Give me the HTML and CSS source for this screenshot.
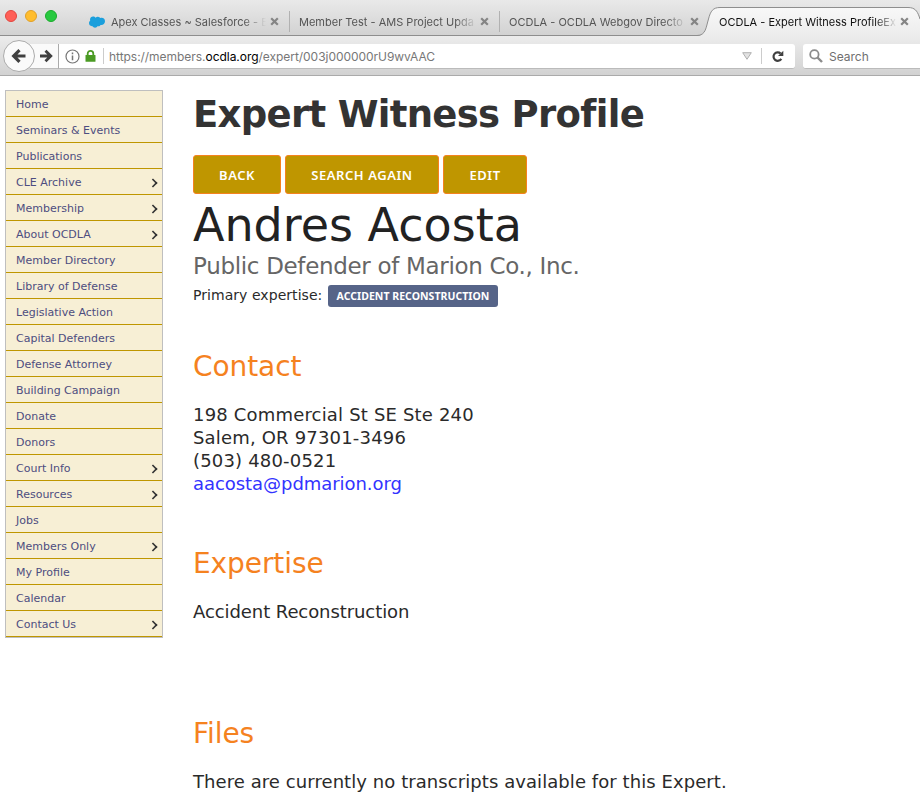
FILE: index.html
```html
<!DOCTYPE html>
<html lang="en">
<head>
<meta charset="utf-8">
<title>OCDLA - Expert Witness Profile</title>
<link rel="stylesheet" href="styles.css">
</head>
<body>
<svg class="defs" width="0" height="0">
  <symbol id="close" viewBox="0 0 9 9"><path d="M1.200 1.200l6.600 6.600M7.800 1.200L1.200 7.800" stroke="#858585" stroke-width="2.200" fill="none"/></symbol>
</svg>
<header class="tabs">
  <div class="lights"><i class="red"></i><i class="amber"></i><i class="green"></i></div>
  <div class="tab tab-first">
    <svg class="cloud" width="16" height="12" viewBox="0 0 16 12"><path d="M3 10.200C1 10.200 0 8.700 0 7.100 0 5.700.8 4.900 1.200 4.500.500 2 2.200.5 4 .5c1.200 0 2 .5 2.600 1.200C7.300.9 8.200.6 9 .7c1 .1 1.800.6 2.200 1.300C13.800 1 16 2.700 16 5.200c0 2.700-2.200 4.200-4.400 3.800-.7 1.300-2 1.500-2.900 1.100C7.600 12.300 4.200 12 3.600 10.200z" fill="#1b9fdc"/></svg>
    <span class="label t1">Apex Classes ~ Salesforce - E</span>
    <svg class="x" width="9" height="9"><use href="#close"/></svg>
  </div>
  <div class="tab tab-second">
    <span class="label t2">Member Test - AMS Project Upda</span>
    <svg class="x" width="9" height="9"><use href="#close"/></svg>
  </div>
  <div class="tab tab-third">
    <span class="label t3">OCDLA - OCDLA Webgov Directo</span>
    <svg class="x" width="9" height="9"><use href="#close"/></svg>
  </div>
  <div class="tab tab-active">
    <svg class="shape" width="223" height="36" viewBox="0 0 223 36"><defs><linearGradient id="g" x1="0" y1="0" x2="0" y2="1"><stop offset="0" stop-color="#f8f8f8"/><stop offset="1" stop-color="#ececec"/></linearGradient></defs><path d="M0 36C9 35.500 9 27 11.500 19 13.500 11 16 7.500 23 7.500H211C218 7.500 220 11 222 16L223 20V36z" fill="url(#g)"/><path d="M0 35.500C9 35.500 9 27 11.500 19 13.500 11 16 7.500 23 7.500H211C218 7.500 220 11 222 16L223 19" fill="none" stroke="#8e8e8e"/></svg>
    <span class="label t4">OCDLA - Expert Witness ProfileEx</span>
    <svg class="x" width="9" height="9"><use href="#close"/></svg>
  </div>
</header>
<div class="toolbar">
  <div class="back"><svg width="16" height="16" viewBox="0 0 16 16"><path d="M14.500 8H3M8.500 2.200L2.700 8l5.800 5.800" fill="none" stroke="#404040" stroke-width="3.200"/></svg></div>
  <div class="forward"><svg width="13" height="14" viewBox="0 0 13 14"><path d="M0 7h10M5.500 1.700L10.800 7l-5.300 5.300" fill="none" stroke="#404040" stroke-width="2.800"/></svg></div>
  <div class="url">
    <svg class="info" width="15" height="15" viewBox="0 0 15 15"><circle cx="7.500" cy="7.500" r="6.500" fill="none" stroke="#757575" stroke-width="1.200"/><path d="M7.500 6.400v4.800M7.500 3.500v1.700" stroke="#757575" stroke-width="1.500"/></svg>
    <svg class="lock" width="11" height="12" viewBox="0 0 11 12"><path d="M2.700 6V3.700a2.800 2.800 0 015.600 0V6" fill="none" stroke="#4b9b24" stroke-width="1.800"/><rect x=".5" y="5" width="10" height="6.800" rx=".6" fill="#4b9b24"/></svg>
    <i class="bar"></i>
    <span class="address">https://members.<b>ocdla.org</b>/expert/003j000000rU9wvAAC</span>
    <svg class="drop" width="10" height="8" viewBox="0 0 10 8"><path d="M.7.700h8.600L5 7.300z" fill="#e2e2e2" stroke="#b0b0b0"/></svg>
    <i class="bar"></i>
    <svg class="reload" width="12" height="13" viewBox="0 0 12 13"><path d="M8.600 3.500A4.200 4.200 0 109.300 8.800" fill="none" stroke="#404040" stroke-width="2.200"/><path d="M11.300.700V6H6z" fill="#404040"/></svg>
  </div>
  <div class="search">
    <svg width="14" height="14" viewBox="0 0 14 14"><circle cx="5.400" cy="5.400" r="4.200" fill="none" stroke="#8b8b8b" stroke-width="1.800"/><path d="M8.500 8.500l4.500 4.500" stroke="#8b8b8b" stroke-width="2.400"/></svg>
    <span>Search</span>
  </div>
</div>
<div class="page">
  <nav class="menu">
    <a>Home</a><a>Seminars &amp; Events</a><a>Publications</a><a class="sub">CLE Archive</a><a class="sub">Membership</a><a class="sub">About OCDLA</a><a>Member Directory</a><a>Library of Defense</a><a>Legislative Action</a><a>Capital Defenders</a><a>Defense Attorney</a><a>Building Campaign</a><a>Donate</a><a>Donors</a><a class="sub">Court Info</a><a class="sub">Resources</a><a>Jobs</a><a class="sub">Members Only</a><a>My Profile</a><a>Calendar</a><a class="sub">Contact Us</a>
  </nav>
  <main>
    <h1>Expert Witness Profile</h1>
    <div class="buttons"><a class="b1">BACK</a><a class="b2">SEARCH AGAIN</a><a class="b3">EDIT</a></div>
    <div class="name">Andres Acosta</div>
    <div class="company">Public Defender of Marion Co., Inc.</div>
    <div class="primary"><span>Primary expertise:</span><span class="badge">ACCIDENT RECONSTRUCTION</span></div>
    <h2>Contact</h2>
    <p class="contact">198 Commercial St SE Ste 240<br>Salem, OR 97301-3496<br>(503) 480-0521<br><a class="mail">aacosta@pdmarion.org</a></p>
    <h2>Expertise</h2>
    <p class="expertise">Accident Reconstruction</p>
    <h2>Files</h2>
    <p class="files">There are currently no transcripts available for this Expert.</p>
  </main>
</div>
</body>
</html>
```
FILE: styles.css
```css
* { box-sizing: border-box; }
body { margin: 0; height: 792px; overflow: hidden; background: #fff; font-family: "DejaVu Sans", Verdana, sans-serif; color: #2a2a2a; }
svg { display: block; flex: none; }
.defs { position: absolute; }

.tabs { display: flex; height: 36px; background: linear-gradient(#e9e9e9, #d2d2d2); border-bottom: 1px solid #8e8e8e; font: 11px/14px Inter, sans-serif; color: #555; }
.lights { display: flex; gap: 8px; padding: 10px 0 0 5px; width: 79px; flex: none; }
.lights i { width: 12px; height: 12px; border-radius: 50%; border: 1px solid; }
.red { background: #ff5f57; border-color: #e2463f !important; }
.amber { background: #ffbd2e; border-color: #e0a028 !important; }
.green { background: #28c940; border-color: #1aab2c !important; }
.tab { display: flex; height: 36px; position: relative; flex: none; padding-top: 15px; }
.tab .x { margin-top: 2px; }
.tab-first { width: 210px; padding-left: 10px; }
.tab-second, .tab-third { width: 210px; padding-left: 10px; }
.tab-third { width: 198px; }
.tab-second::before, .tab-third::before { content: ""; position: absolute; left: 0; top: 11px; width: 1px; height: 21px; background: #b1b1b1; }
.cloud { margin: 1px 6px 0 0; }
.label { white-space: nowrap; flex: none; -webkit-mask-image: linear-gradient(90deg, #000 calc(100% - 22px), transparent); mask-image: linear-gradient(90deg, #000 calc(100% - 22px), transparent); }
.t1 { width: 155px; margin-right: 4px; }
.t2 { width: 178px; margin-right: 3px; }
.t3 { width: 178px; margin-right: 3px; }
.tab-active { width: 223px; padding-left: 22px; color: #111; }
.shape { position: absolute; left: 0; top: 0; }
.t4, .tab-active .x { position: relative; }
.t4 { width: 178px; margin-right: 3px; }

.toolbar { display: flex; height: 40px; padding: 8px 0 0 3px; background: linear-gradient(#ececec, #d2d2d2); border-bottom: 1px solid #aaa; }
.back { width: 32px; height: 32px; margin-top: -4px; border: 1px solid #ababab; border-radius: 50%; background: #fafafa; display: flex; align-items: center; justify-content: center; position: relative; z-index: 1; flex: none; }
.forward { width: 29px; height: 25px; margin-left: -5px; padding: 5px 0 0 10px; background: #fafafa; border-right: 1px solid #aaa; border-bottom: 1px solid #bbb; flex: none; }
.url { width: 736px; height: 25px; display: flex; align-items: center; background: #fff; border-bottom: 1px solid #bbb; border-radius: 0 3px 3px 0; padding-left: 6px; flex: none; }
.lock { margin-left: 5px; }
.bar { width: 1px; height: 16px; background: #ccc; margin-left: 7px; }
.address { font: 12px/16px Inter, sans-serif; letter-spacing: -.04px; color: #777; margin-left: 5px; width: 633px; padding-top: 1px; }
.address b { font-weight: 400; color: #000; }
.url .drop { margin-right: 2px; }
.reload { margin-left: 10px; }
.search { display: flex; align-items: center; width: 130px; flex: none; height: 25px; margin-left: 8px; padding-left: 6px; gap: 6px; background: #fff; border-bottom: 1px solid #bbb; border-radius: 3px 0 0 3px; font: 12px/16px Inter, sans-serif; color: #6f6f6f; }
.search span { padding-top: 2px; }

.page { display: flex; align-items: flex-start; padding: 14px 0 0 5px; }
.menu { width: 158px; border: 1px solid #bfbfbf; flex: none; }
.menu a { display: flex; align-items: center; justify-content: space-between; height: 26px; padding: 2px 5px 0 10px; background: #f7efd5; border-bottom: 1px solid #bf9600; font-size: 11px; line-height: 15px; color: #4d4d80; }
.menu .sub::after { content: ""; width: 6px; height: 6px; border: solid #333; border-width: 2px 2px 0 0; transform: scale(.8) rotate(45deg); }
main { margin-left: 30px; padding-top: 3px; width: 700px; white-space: nowrap; }
h1, h2, p { margin: 0; }
h1 { font-size: 37px; line-height: 44px; color: #333; letter-spacing: -.7px; }
.buttons { display: flex; gap: 4px; margin-top: 18px; }
.buttons a { height: 39px; border: 1px solid #f5821f; border-radius: 3px; background: #bf9600; color: #fff; font: 600 13px/39px "Noto Sans", sans-serif; letter-spacing: .55px; text-align: center; }
.b1 { width: 88px; } .b2 { width: 154px; } .b3 { width: 84px; }
.name { font-size: 46px; line-height: 56px; margin-top: 3px; color: #222; }
.company { font-size: 23px; line-height: 26px; color: #666; letter-spacing: -.32px; }
.primary { display: flex; font-size: 14px; line-height: 21px; height: 22px; margin-top: 6px; }
.primary span:first-child { width: 129px; letter-spacing: .05px; }
.badge { width: 170px; margin-left: 6px; height: 22px; background: #566488; border-radius: 3px; color: #fff; font: 700 10.500px/22px "Noto Sans", sans-serif; letter-spacing: .04px; text-align: center; }
h2 { font-size: 28px; font-weight: 400; line-height: 34px; color: #f5821f; margin: 43px 0 19px; letter-spacing: -.08px; }
p { font-size: 18px; line-height: 23px; }
.contact { margin-bottom: 52px; letter-spacing: .18px; }
.expertise { margin-bottom: 94px; letter-spacing: -.08px; }
.files { letter-spacing: .07px; }
.mail { color: #33f; letter-spacing: -.05px; }
```
